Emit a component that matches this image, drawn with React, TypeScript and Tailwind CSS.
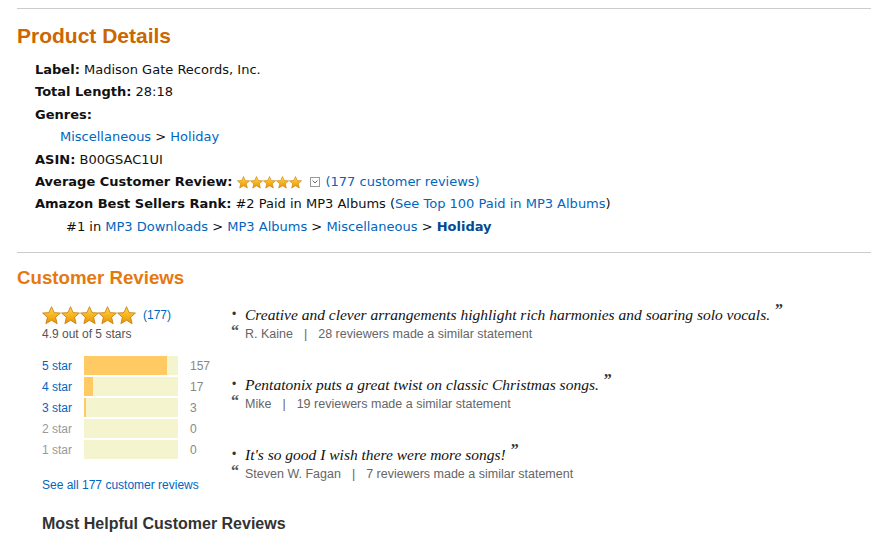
import React from 'react';

const verdana = { fontFamily: '"DejaVu Sans", Verdana, sans-serif' };
const serif = { fontFamily: '"Liberation Serif", Georgia, serif' };

const Star: React.FC<{ size: number; id: string }> = ({ size, id }) => (
  <svg width={size} height={size} viewBox="0 0 20 20" className="block">
    <defs>
      <linearGradient id={id} x1="0" y1="0" x2="0" y2="1">
        <stop offset="0" stopColor="#ffd75a" />
        <stop offset="0.55" stopColor="#f7b21a" />
        <stop offset="1" stopColor="#e8900a" />
      </linearGradient>
    </defs>
    <polygon
      points="10,0.8 12.8,7 19.4,7.4 14.3,11.8 15.9,18.6 10,15 4.1,18.6 5.7,11.8 0.6,7.4 7.2,7"
      fill={`url(#${id})`}
      stroke="#c77d0a"
      strokeWidth="0.9"
      strokeLinejoin="round"
    />
  </svg>
);

const Stars: React.FC<{ size: number; prefix: string; step: number }> = ({ size, prefix, step }) => (
  <div className="flex" style={{ width: step * 5 }}>
    {[0, 1, 2, 3, 4].map((i) => (
      <div key={i} style={{ width: step }}>
        <Star size={size} id={`${prefix}${i}`} />
      </div>
    ))}
  </div>
);

const histogram = [
  { label: '5 star', count: 157, active: true },
  { label: '4 star', count: 17, active: true },
  { label: '3 star', count: 3, active: true },
  { label: '2 star', count: 0, active: false },
  { label: '1 star', count: 0, active: false },
];

const quotes = [
  {
    text: 'Creative and clever arrangements highlight rich harmonies and soaring solo vocals.',
    author: 'R. Kaine',
    similar: 28,
  },
  {
    text: 'Pentatonix puts a great twist on classic Christmas songs.',
    author: 'Mike',
    similar: 19,
  },
  {
    text: "It's so good I wish there were more songs!",
    author: 'Steven W. Fagan',
    similar: 7,
  },
];

const Row: React.FC<{ children: React.ReactNode; className?: string }> = ({ children, className = '' }) => (
  <div className={`h-[22.4px] leading-[22.4px] whitespace-nowrap ${className}`}>{children}</div>
);

export default function App() {
  return (
    <div className="w-[872px] h-[542px] overflow-hidden bg-white text-[#111]" style={{ fontFamily: '"Liberation Sans", Arial, sans-serif' }}>
      <div className="ml-[17px] mr-px mt-2 border-t border-[#cccccc]" />

      <div className="pl-[17px]">
        <h2 className="mt-[15px] text-[21px] leading-[24px] font-bold text-[#cc6600]">Product Details</h2>

        <div className="mt-[11px] pl-[18px] text-[13px]" style={verdana}>
          <Row>
            <b>Label:</b> Madison Gate Records, Inc.
          </Row>
          <Row>
            <b>Total Length:</b> 28:18
          </Row>
          <Row>
            <b>Genres:</b>
          </Row>
          <Row className="pl-[25px]">
            <span className="text-[#0066c0]">Miscellaneous</span> &gt;{' '}
            <span className="text-[#0066c0]">Holiday</span>
          </Row>
          <Row>
            <b>ASIN:</b> B00GSAC1UI
          </Row>
          <Row className="flex items-center">
            <b>Average Customer Review:</b>
            <span className="ml-[5px]">
              <Stars size={13} prefix="sm" step={12.8} />
            </span>
            <span className="ml-[9px] w-[10px] h-[10px] border border-[#9a9a9a] flex items-center justify-center">
              <svg width="6" height="4" viewBox="0 0 6 4">
                <path d="M0.5 0.5 L3 3 L5.5 0.5" fill="none" stroke="#666" strokeWidth="1" />
              </svg>
            </span>
            <span className="ml-[5px] text-[#0066c0]">(177 customer reviews)</span>
          </Row>
          <Row>
            <b>Amazon Best Sellers Rank:</b> #2 Paid in MP3 Albums (
            <span className="text-[#0066c0]">See Top 100 Paid in MP3 Albums</span>)
          </Row>
          <Row className="pl-[31px]">
            #1 in <span className="text-[#0066c0]">MP3 Downloads</span> &gt;{' '}
            <span className="text-[#0066c0]">MP3 Albums</span> &gt;{' '}
            <span className="text-[#0066c0]">Miscellaneous</span> &gt;{' '}
            <b className="text-[#004b91]">Holiday</b>
          </Row>
        </div>
      </div>

      <div className="ml-[17px] mr-px mt-[14px] border-t border-[#cccccc]" />

      <div className="pl-[17px]">
        <h2 className="mt-[14px] text-[18.7px] leading-[22px] font-bold text-[#e47911]">Customer Reviews</h2>

        <div className="flex mt-[16px] pl-[25px]">
          <div className="w-[189px] shrink-0">
            <div className="flex items-center h-[20px]">
              <Stars size={19} prefix="lg" step={18.8} />
              <span className="ml-[7px] text-[12px] text-[#0066c0]">(177)</span>
            </div>
            <div className="mt-[2px] text-[12px] leading-[14px] text-[#555]">4.9 out of 5 stars</div>

            <div className="mt-[15px] flex flex-col gap-[2px] text-[12px]">
              {histogram.map((h) => (
                <div key={h.label} className="flex items-center h-[19px]">
                  <span className={`w-[42px] ${h.active ? 'text-[#0066c0]' : 'text-[#999]'}`}>{h.label}</span>
                  <div className="w-[94px] h-[19px] bg-[#f4f4cf]">
                    <div className="h-full bg-[#ffca63]" style={{ width: `${(h.count / 177) * 100}%` }} />
                  </div>
                  <span className="ml-[12px] text-[#888]">{h.count}</span>
                </div>
              ))}
            </div>

            <div className="mt-[19px] text-[12px] leading-[14px] text-[#0066c0] whitespace-nowrap">
              See all 177 customer reviews
            </div>
          </div>

          <div className="flex flex-col gap-[34px]">
            {quotes.map((q) => (
              <div key={q.author}>
                <div className="flex items-center h-[20px] whitespace-nowrap -mt-px">
                  <span className="w-[14px] text-[12px] leading-none text-[#333] pl-[1px]">•</span>
                  <span className="italic text-[15.5px] text-[#111]" style={serif}>
                    {q.text}
                  </span>
                  <span className="ml-[5px] -mt-[8px] text-[16px] font-bold text-[#333]" style={serif}>
                    ”
                  </span>
                </div>
                <div className="mt-[3px] flex items-center h-[14px] text-[12.5px] text-[#666] whitespace-nowrap">
                  <span className="w-[14px] -mt-[6px] text-[16px] font-bold text-[#555]" style={serif}>
                    “
                  </span>
                  <span>{q.author}</span>
                  <span className="mx-[11px]">|</span>
                  <span>{q.similar} reviewers made a similar statement</span>
                </div>
              </div>
            ))}
          </div>
        </div>

        <h3 className="mt-[22px] pl-[25px] text-[16px] leading-[20px] font-bold text-[#333]">
          Most Helpful Customer Reviews
        </h3>
      </div>
    </div>
  );
}
